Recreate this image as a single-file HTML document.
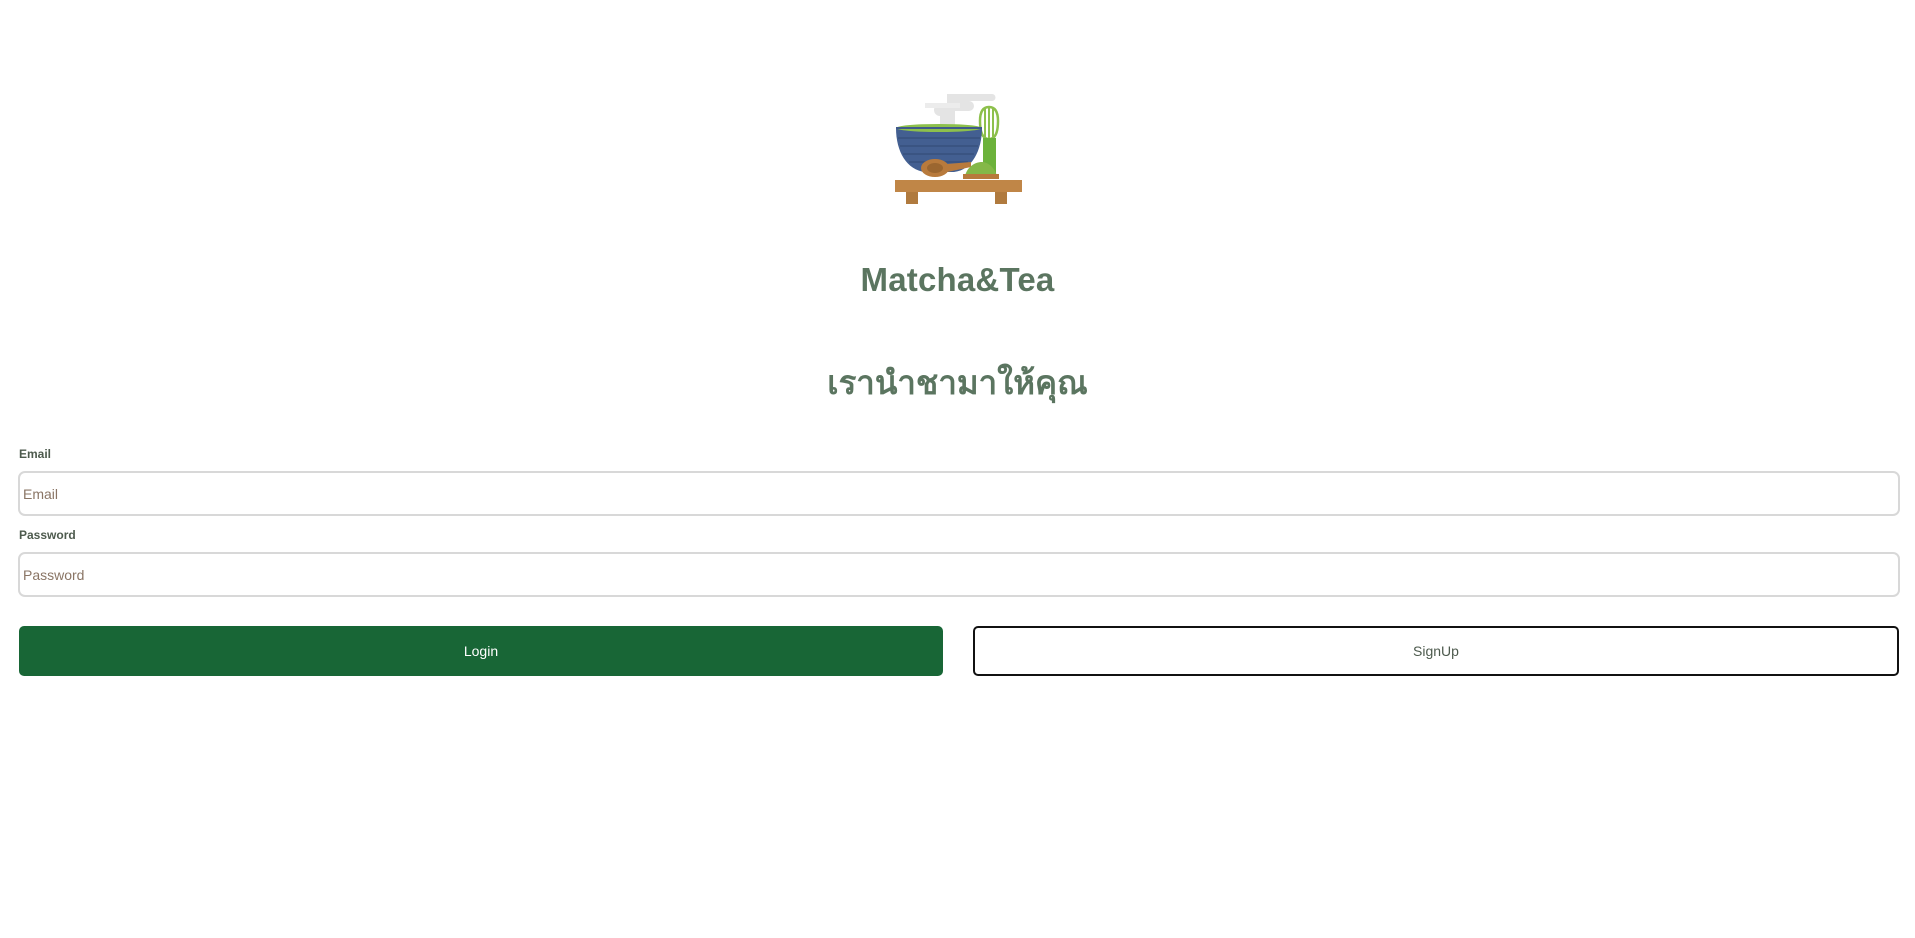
<!DOCTYPE html>
<html><head><meta charset="utf-8"><style>
*{box-sizing:border-box;margin:0;padding:0}
body{width:1915px;height:938px;background:#fff;font-family:"Liberation Sans","Noto Sans CJK SC",sans-serif;position:relative;overflow:hidden}
.logo{position:absolute;left:895px;top:94px;width:127px;height:110px}
h1{position:absolute;left:0;width:1915px;top:261px;text-align:center;font-size:33px;font-weight:bold;color:#5b7560;letter-spacing:0.2px}
h2{position:absolute;left:0;width:1915px;top:356px;text-align:center;font-size:33px;font-weight:bold;color:#5b7560;font-family:"Liberation Sans","DejaVu Sans",sans-serif}
label{position:absolute;left:19px;font-size:12px;font-weight:bold;color:#4d5a4d}
.in{position:absolute;left:18px;width:1882px;height:45px;border:2px solid #d8d8d8;border-radius:7px;font-size:14px;color:#8a7565;padding:13px 0 0 3px}
.btn{position:absolute;top:626px;height:50px;border-radius:5px;font-size:14px;text-align:center;line-height:50px}
</style></head><body>
<svg class="logo" viewBox="0 0 127 110">
<path d="M52 0h45a3 3 0 0 1 0 7H74a5 5 0 0 1 0 10H60v14H45V22a6 6 0 0 1 0-12h7z" fill="#e4e4e4"/>
<path d="M30 9h35v5H30z" fill="#ececec"/>
<path d="M94 45c-7 0-9-8-9-18 0-9 3-14 9-14s9 5 9 14c0 10-2 18-9 18z" fill="none" stroke="#8dc04c" stroke-width="2.5"/>
<path d="M90 14v30M94 13v32M98 14v30" stroke="#8dc04c" stroke-width="2"/>
<rect x="88" y="44" width="13" height="40" fill="#6cb23b"/>
<path d="M1 34h86c0 22-10 42-28 44H30C12 76 1 58 1 34z" fill="#435f91"/>
<path d="M3 44h82M5 52h78M8 60h71M14 68h59" stroke="#3a5482" stroke-width="2"/>
<ellipse cx="44" cy="34" rx="43" ry="4" fill="#8dc04c"/>
<path d="M1 33h86v2H1z" fill="#3f5a8a"/>
<ellipse cx="40" cy="74" rx="14" ry="9" fill="#b87a3c"/>
<ellipse cx="40" cy="74" rx="8" ry="5" fill="#9b6630"/>
<path d="M52 70l24-2v5l-24 5z" fill="#b87a3c"/>
<path d="M70 82c2-9 10-14 17-14s13 7 15 14z" fill="#84b848"/>
<rect x="68" y="80" width="36" height="5" fill="#b87a3c"/>
<rect x="0" y="86" width="127" height="12" fill="#c08647"/>
<rect x="11" y="98" width="12" height="12" fill="#b07a3e"/>
<rect x="100" y="98" width="12" height="12" fill="#b07a3e"/>
</svg>
<h1>Matcha&amp;Tea</h1>
<h2>เรานำชามาให้คุณ</h2>
<label style="top:447px">Email</label>
<div class="in" style="top:471px">Email</div>
<label style="top:528px">Password</label>
<div class="in" style="top:552px">Password</div>
<div class="btn" style="left:19px;width:924px;background:#186636;color:#fff">Login</div>
<div class="btn" style="left:973px;width:926px;border:2px solid #111;color:#4d5a4d;line-height:46px">SignUp</div>
</body></html>
